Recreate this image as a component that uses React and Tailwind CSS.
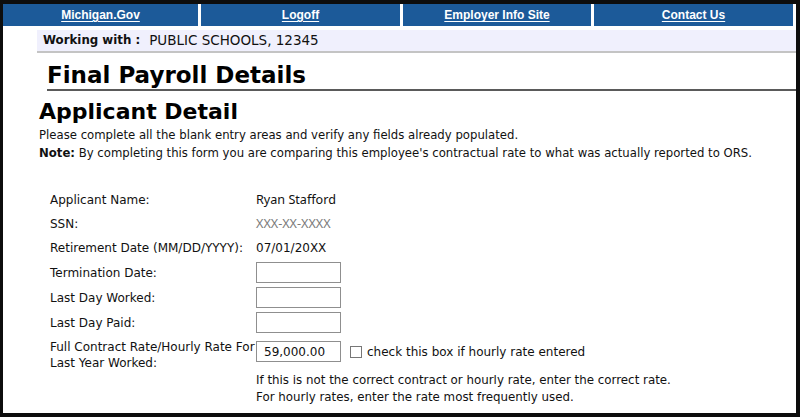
import React from "react";

const verdana = { fontFamily: "'DejaVu Sans', Verdana, sans-serif" };

const NavCell = ({ label, className }) => (
  <div className={`flex items-center justify-center bg-[#1c5a99] ${className}`}>
    <a href="#" className="text-[12px] font-bold text-white underline underline-offset-2 font-['Liberation_Sans',Arial,sans-serif]">
      {label}
    </a>
  </div>
);

const Row = ({ label, children, className = "h-[24px]" }) => (
  <>
    <div className={`flex items-center text-[12px] text-[#111] ${className}`}>{label}</div>
    <div className={`flex items-center ${className}`}>{children}</div>
  </>
);

const Box = ({ value = "" }) => (
  <div className="flex h-[21px] w-[85px] items-center border border-[#8f8f8f] bg-white px-[7px] text-[12px] text-[#111]">
    {value}
  </div>
);

export default function App() {
  return (
    <div className="h-[417px] w-[800px] bg-[#0d0d0d] pb-[4px] pl-[3px] pr-[4px] pt-[4px]">
      <div className="flex h-full flex-col bg-white" style={verdana}>
        {/* top nav */}
        <div className="flex h-[22px] gap-[3px]">
          <NavCell label="Michigan.Gov" className="w-[195px]" />
          <NavCell label="Logoff" className="w-[199px]" />
          <NavCell label="Employer Info Site" className="w-[188px]" />
          <NavCell label="Contact Us" className="w-[199px]" />
          <div className="flex-1 bg-[#1c5a99]" />
        </div>

        {/* working with bar */}
        <div className="ml-[34px] mt-[4px] flex h-[23px] items-center border-b-2 border-[#c4c4c4] bg-[#f0f0fd] pl-[6px] text-[#111]">
          <span className="text-[11.8px] font-bold">Working with :</span>
          <span className="ml-[9px] text-[13.5px]">PUBLIC SCHOOLS, 12345</span>
        </div>

        {/* page title */}
        <div className="ml-[44px] mt-[9px] border-b-2 border-[#5a5a5a] pb-[1px]">
          <h1 className="text-[23px] font-bold leading-[26px] text-black">Final Payroll Details</h1>
        </div>

        <div className="ml-[36px] mt-[8px]">
          <h2 className="text-[22px] font-bold leading-[26px] text-black">Applicant Detail</h2>
          <p className="mt-[1px] text-[11.7px] leading-[18px] text-[#111]">
            Please complete all the blank entry areas and verify any fields already populated.
          </p>
          <p className="text-[11.7px] leading-[18px] text-[#111]">
            <span className="font-bold">Note:</span> By completing this form you are comparing this employee's contractual rate to what was actually reported to ORS.
          </p>
        </div>

        {/* form */}
        <div className="ml-[47px] mt-[26px] grid grid-cols-[206px_auto]">
          <Row label="Applicant Name:">
            <span className="text-[12.6px] text-[#111] font-['Noto_Sans',sans-serif]">Ryan Stafford</span>
          </Row>
          <Row label="SSN:">
            <span className="text-[12.6px] text-[#7a7a7a] font-['Noto_Sans',sans-serif]">XXX-XX-XXXX</span>
          </Row>
          <Row label="Retirement Date (MM/DD/YYYY):">
            <span className="text-[12px] text-[#111]">07/01/20XX</span>
          </Row>
          <Row label="Termination Date:" className="h-[25px]">
            <Box />
          </Row>
          <Row label="Last Day Worked:" className="h-[25px]">
            <Box />
          </Row>
          <Row label="Last Day Paid:" className="h-[25px]">
            <Box />
          </Row>
          <div className="mt-[4px] text-[12px] leading-[16px] text-[#111]">
            Full Contract Rate/Hourly Rate For
            <br />
            Last Year Worked:
          </div>
          <div className="mt-[6px]">
            <div className="flex items-center">
              <Box value="59,000.00" />
              <span className="ml-[9px] h-[12px] w-[12px] border border-[#777] bg-white" />
              <span className="ml-[5px] text-[12px] text-[#111]">check this box if hourly rate entered</span>
            </div>
            <p className="mt-[10px] text-[11.85px] leading-[17px] text-[#111]">
              If this is not the correct contract or hourly rate, enter the correct rate.
            </p>
            <p className="text-[11.85px] leading-[17px] text-[#111]">
              For hourly rates, enter the rate most frequently used.
            </p>
          </div>
        </div>
      </div>
    </div>
  );
}
